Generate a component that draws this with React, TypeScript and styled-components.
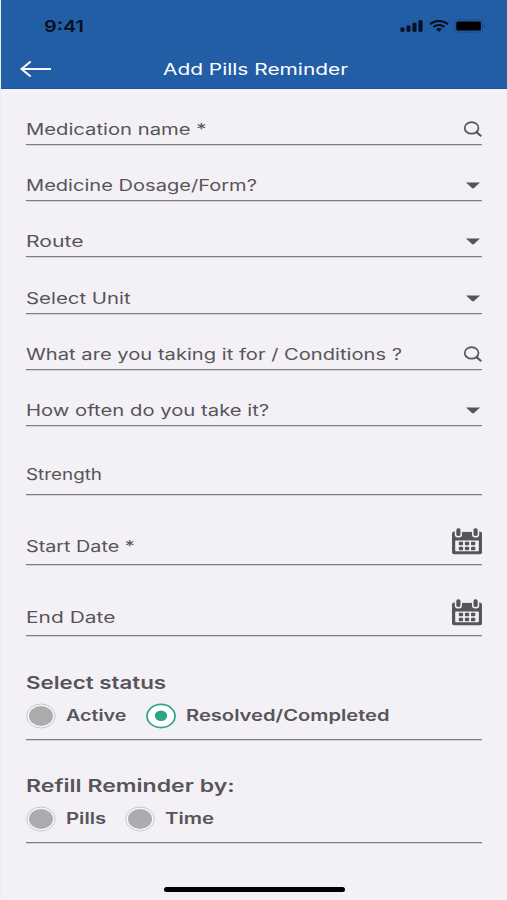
import React from "react";
import styled, { createGlobalStyle } from "styled-components";

const ink = "#57555a";
const surface = "#f3f1f5";
const green = "#2fa588";

const GlobalStyle = createGlobalStyle`
  * { box-sizing: border-box; }
  body { margin: 0; background: ${surface}; }
`;

const Screen = styled.main`
  display: flex;
  flex-direction: column;
  width: 507px;
  height: 900px;
  overflow: hidden;
  background: ${surface};
  border-left: 1px solid #e9eef6;
  color: ${ink};
  font-family: Inter, "Open Sans", sans-serif;
`;

const Header = styled.header`
  display: flex;
  flex-direction: column;
  flex: none;
  height: 89px;
  background: #225ea6;
  border-bottom: 1px solid #1f549a;
`;

const StatusBar = styled.div`
  display: flex;
  align-items: center;
  justify-content: space-between;
  height: 52px;
  padding: 0 21px 0 43px;
  color: #06101f;
`;

const StatusIcons = styled.div`
  display: flex;
  align-items: center;
  gap: 5px;
`;

const NavBar = styled.div`
  display: grid;
  grid-template-columns: 144px 1fr;
  align-items: center;
  height: 34px;
  padding-left: 18px;
  color: #fff;
`;

const BackButton = styled.button`
  display: flex;
  width: 34px;
  padding: 0;
  border: 0;
  background: none;
  color: inherit;
`;

const Label = styled.span<{ $stretch?: number; $size?: number; $weight?: number }>`
  display: inline-block;
  font-size: ${(p) => p.$size ?? 15.5}px;
  font-weight: ${(p) => p.$weight ?? 430};
  line-height: 20px;
  white-space: nowrap;
  transform: scaleX(${(p) => p.$stretch ?? 1.3});
  transform-origin: left center;
`;

const Form = styled.form`
  display: flex;
  flex-direction: column;
  padding: 0 25px;
`;

const Field = styled.div<{ $height: number; $gap?: number }>`
  display: flex;
  align-items: flex-end;
  justify-content: space-between;
  height: ${(p) => p.$height}px;
  padding-bottom: ${(p) => p.$gap ?? 4}px;
  border-bottom: 1px solid #7e7c81;
  box-shadow: 0 0.5px 0 #b5b3b7;
`;

const IconSlot = styled.span<{ $right?: number; $bottom?: number }>`
  display: flex;
  align-items: center;
  height: 20px;
  margin: 0 ${(p) => p.$right ?? 0}px ${(p) => p.$bottom ?? 0}px 0;
`;

const Group = styled.section<{ $height: number }>`
  display: flex;
  flex-direction: column;
  justify-content: flex-end;
  height: ${(p) => p.$height}px;
  padding-bottom: 10px;
  border-bottom: 1px solid #7e7c81;
  box-shadow: 0 0.5px 0 #b5b3b7;
`;

const Options = styled.div`
  display: flex;
  height: 26px;
  margin-top: 10px;
`;

const Option = styled.label<{ $width: number }>`
  display: flex;
  align-items: center;
  gap: 10px;
  width: ${(p) => p.$width}px;
`;

const HomeBar = styled.div`
  width: 181px;
  height: 5px;
  margin: auto 0 8px 163px;
  flex: none;
  border-radius: 3px;
  background: #000;
`;

const SearchIcon = () => (
  <svg width="19" height="16" viewBox="0 0 19 16" fill="none" stroke={ink}>
    <ellipse cx="8.6" cy="6.9" rx="6.9" ry="5.8" strokeWidth="1.7" />
    <path d="M13.2 10.9 18.3 15.2" strokeWidth="2.1" />
  </svg>
);

const ArrowIcon = () => (
  <svg width="14" height="7" viewBox="0 0 14 7" fill={ink}>
    <path d="M0 .4h14L8.3 5.8Q7 7 5.7 5.8Z" />
  </svg>
);

const CalendarIcon = () => (
  <svg width="31" height="27" viewBox="0 0 31 27">
    <path
      d="M3 3.5h25.5Q31 3.5 31 5.5v18.700q0 2-2 2H3q-2 0-2-2V5.500q0-2 2-2Z"
      fill={ink}
    />
    <rect x="4.200" y="12.600" width="23.600" height="10.700" rx="0.8" fill={surface} />
    <g fill={surface}>
      <rect x="3.800" y="-1" width="7.200" height="10.500" rx="3" />
      <rect x="21" y="-1" width="7.200" height="10.500" rx="3" />
      <path d="M11 2h10v1.800H11Z" />
    </g>
    <g fill={ink}>
      <rect x="5.300" y="0.200" width="4.200" height="7.800" rx="1.800" />
      <rect x="22.500" y="0.200" width="4.200" height="7.800" rx="1.800" />
      {[13.700, 18.700].map((y) =>
        [7.800, 13.900, 20].map((x) => (
          <rect key={`${x}-${y}`} x={x} y={y} width="4.300" height="3.500" rx="0.8" />
        ))
      )}
    </g>
  </svg>
);

const RadioIcon = ({ checked }: { checked?: boolean }) => (
  <svg width="30" height="26" viewBox="0 0 30 26">
    {checked ? (
      <>
        <ellipse cx="15" cy="13" rx="14" ry="11.600" fill="#fff" stroke={green} strokeWidth="1.700" />
        <ellipse cx="15" cy="12.700" rx="6.200" ry="5.200" fill={green} />
      </>
    ) : (
      <>
        <ellipse cx="15" cy="13" rx="14.300" ry="12" fill="#f5f4f6" stroke="#c9c8cb" strokeWidth="1" />
        <ellipse cx="15" cy="13" rx="12" ry="10" fill="#adabae" />
      </>
    )}
  </svg>
);

const SignalIcon = () => (
  <svg width="24" height="12" viewBox="0 0 24 12" fill="#06101f">
    <rect x="0.500" y="7.500" width="4" height="4.300" rx="1" />
    <rect x="6.500" y="5.400" width="4" height="6.400" rx="1" />
    <rect x="12.500" y="2.800" width="4" height="9" rx="1" />
    <rect x="18.500" y="0.200" width="4" height="11.600" rx="1" />
  </svg>
);

const WifiIcon = () => (
  <svg width="20" height="12" viewBox="0 0 20 12" fill="none" stroke="#06101f">
    <path d="M1 4.100Q10-2.200 19 4.100" strokeWidth="2.100" />
    <path d="M4.400 7Q10 3 15.600 7" strokeWidth="2" />
    <path d="M7 9Q10 7.200 13 9L10 11.700Z" fill="#06101f" stroke="none" />
  </svg>
);

const BatteryIcon = () => (
  <svg width="32" height="14" viewBox="0 0 32 14">
    <rect x="0.700" y="0.900" width="27.800" height="12.200" rx="3" fill="none" stroke="#1b4d89" />
    <rect x="2.300" y="2.400" width="24.600" height="9.200" rx="1.700" fill="#000" />
    <path d="M29.700 5q2.600 2 0 4Z" fill="#1a4378" />
  </svg>
);

const BackIcon = () => (
  <svg width="34" height="18" viewBox="0 0 34 18" fill="none" stroke="currentColor" strokeWidth="1.900">
    <path d="M11.700 1.500 2.500 9l9.200 7.500M2.500 9h29.500" />
  </svg>
);

type Kind = "search" | "select" | "date" | "text";

interface FieldSpec {
  label: string;
  kind: Kind;
  height: number;
  gap?: number;
  stretch: number;
}

const fields: FieldSpec[] = [
  { label: "Medication name *", kind: "search", height: 56, stretch: 1.305 },
  { label: "Medicine Dosage/Form?", kind: "select", height: 56, stretch: 1.295 },
  { label: "Route", kind: "select", height: 56, stretch: 1.365 },
  { label: "Select Unit", kind: "select", height: 57, stretch: 1.315 },
  { label: "What are you taking it for / Conditions ?", kind: "search", height: 56, stretch: 1.3 },
  { label: "How often do you take it?", kind: "select", height: 56, stretch: 1.307 },
  { label: "Strength", kind: "text", height: 69, gap: 9, stretch: 1.215 },
  { label: "Start Date *", kind: "date", height: 70, gap: 7, stretch: 1.275 },
  { label: "End Date", kind: "date", height: 71, gap: 7, stretch: 1.35 },
];

const FieldIcon = ({ kind }: { kind: Kind }) => {
  if (kind === "search") return <IconSlot $bottom={1}><SearchIcon /></IconSlot>;
  if (kind === "select") return <IconSlot $right={2} $bottom={1}><ArrowIcon /></IconSlot>;
  if (kind === "date") return <IconSlot $bottom={6}><CalendarIcon /></IconSlot>;
  return null;
};

export default function App() {
  return (
    <>
      <GlobalStyle />
      <Screen>
        <Header>
          <StatusBar>
            <Label $size={16.5} $weight={600} $stretch={1.2}>9:41</Label>
            <StatusIcons>
              <SignalIcon />
              <WifiIcon />
              <BatteryIcon />
            </StatusIcons>
          </StatusBar>
          <NavBar>
            <BackButton aria-label="Back"><BackIcon /></BackButton>
            <Label $size={16} $stretch={1.305}>Add Pills Reminder</Label>
          </NavBar>
        </Header>
        <Form>
          {fields.map((f) => (
            <Field key={f.label} $height={f.height} $gap={f.gap}>
              <Label $stretch={f.stretch}>{f.label}</Label>
              <FieldIcon kind={f.kind} />
            </Field>
          ))}
          <Group $height={104}>
            <Label $size={17.5} $weight={600} $stretch={1.275}>Select status</Label>
            <Options>
              <Option $width={120}>
                <RadioIcon />
                <Label $weight={600} $stretch={1.27}>Active</Label>
              </Option>
              <Option $width={280}>
                <RadioIcon checked />
                <Label $weight={600} $stretch={1.3}>Resolved/Completed</Label>
              </Option>
            </Options>
          </Group>
          <Group $height={103}>
            <Label $size={17.5} $weight={600} $stretch={1.318}>Refill Reminder by:</Label>
            <Options>
              <Option $width={99}>
                <RadioIcon />
                <Label $weight={600} $stretch={1.31}>Pills</Label>
              </Option>
              <Option $width={120}>
                <RadioIcon />
                <Label $weight={600} $stretch={1.31}>Time</Label>
              </Option>
            </Options>
          </Group>
        </Form>
        <HomeBar />
      </Screen>
    </>
  );
}
